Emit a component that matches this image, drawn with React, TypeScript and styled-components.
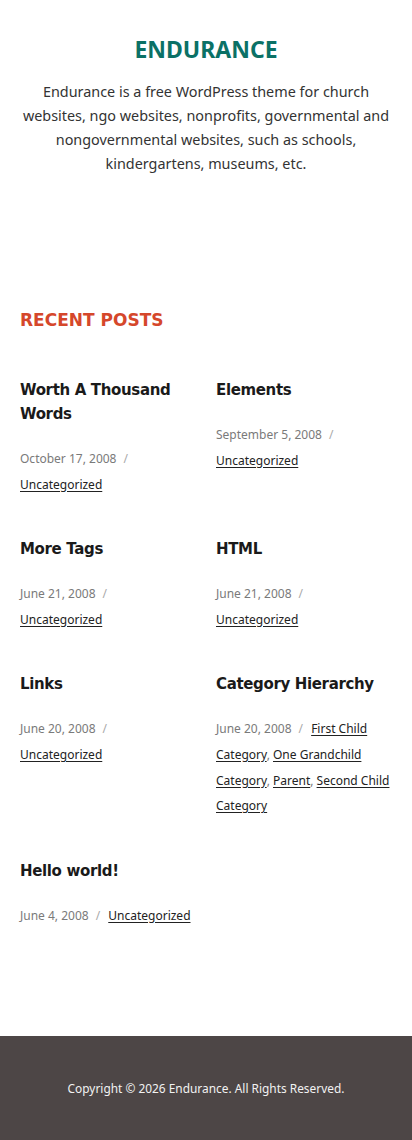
import React from "react";
import styled, { createGlobalStyle } from "styled-components";

const Global = createGlobalStyle`
  html, body { margin: 0; padding: 0; background: #fff; }
  body { font-family: "Noto Sans", "Open Sans", sans-serif; color: #333; }
  * { box-sizing: border-box; }
`;

const Page = styled.div`
  display: flex;
  flex-direction: column;
  min-height: 1140px;
`;

const Header = styled.header`
  padding: 33px 20px 0;
  text-align: center;
`;

const SiteTitle = styled.h1`
  margin: 0;
  font-family: "Noto Sans", sans-serif;
  font-weight: 700;
  font-size: 23px;
  line-height: 32px;
  color: #0b7166;
`;

const Tagline = styled.p`
  margin: 15px 0 0;
  font-size: 14.4px;
  line-height: 24px;
  color: #333;
`;

const Main = styled.main`
  padding: 131px 20px 0;
  flex: 1;
`;

const SectionTitle = styled.h2`
  margin: 0;
  font-family: "DejaVu Sans", sans-serif;
  font-weight: 700;
  font-size: 17px;
  line-height: 26px;
  color: #d5472b;
`;

const Grid = styled.div`
  margin-top: 45px;
  display: grid;
  grid-template-columns: 176px 176px;
  column-gap: 20px;
  row-gap: 40px;
`;

const Post = styled.article`
  display: flex;
  flex-direction: column;
`;

const PostTitle = styled.h3`
  margin: 0;
  font-family: "DejaVu Sans", sans-serif;
  font-weight: 700;
  font-size: 15px;
  line-height: 24px;
  color: #1a1a1a;
  letter-spacing: -0.35px;
`;

const Meta = styled.div`
  margin-top: 20px;
  font-size: 12px;
  line-height: 25.6px;
  color: #7a7a7a;
`;

const DateText = styled.span`
  white-space: nowrap;
`;

const Sep = styled.span`
  margin: 0 5px 0 7px;
  color: #aaa;
`;

const Cat = styled.a`
  color: #222;
  text-decoration: underline;
  text-underline-offset: 2px;
`;

const Footer = styled.footer`
  background: #4d4646;
  height: 104px;
  display: flex;
  align-items: center;
  justify-content: center;
  color: #f2f2f2;
  font-size: 11.9px;
`;

type P = { title: string; date: string; cats: string[] };

const posts: P[] = [
  { title: "Worth A Thousand Words", date: "October 17, 2008", cats: ["Uncategorized"] },
  { title: "Elements", date: "September 5, 2008", cats: ["Uncategorized"] },
  { title: "More Tags", date: "June 21, 2008", cats: ["Uncategorized"] },
  { title: "HTML", date: "June 21, 2008", cats: ["Uncategorized"] },
  { title: "Links", date: "June 20, 2008", cats: ["Uncategorized"] },
  {
    title: "Category Hierarchy",
    date: "June 20, 2008",
    cats: ["First Child Category", "One Grandchild Category", "Parent", "Second Child Category"],
  },
  { title: "Hello world!", date: "June 4, 2008", cats: ["Uncategorized"] },
];

export default function App() {
  return (
    <Page>
      <Global />
      <Header>
        <SiteTitle>ENDURANCE</SiteTitle>
        <Tagline>
          Endurance is a free WordPress theme for church websites, ngo websites, nonprofits,
          governmental and nongovernmental websites, such as schools, kindergartens, museums, etc.
        </Tagline>
      </Header>
      <Main>
        <SectionTitle>RECENT POSTS</SectionTitle>
        <Grid>
          {posts.map((p) => (
            <Post key={p.title}>
              <PostTitle>{p.title}</PostTitle>
              <Meta>
                <DateText>
                  {p.date}
                  <Sep>/</Sep>
                </DateText>{" "}
                {p.cats.map((c, i) => (
                  <React.Fragment key={c}>
                    <Cat href="#">{c}</Cat>
                    {i < p.cats.length - 1 ? ", " : ""}
                  </React.Fragment>
                ))}
              </Meta>
            </Post>
          ))}
        </Grid>
      </Main>
      <Footer>Copyright © 2026 Endurance. All Rights Reserved.</Footer>
    </Page>
  );
}
